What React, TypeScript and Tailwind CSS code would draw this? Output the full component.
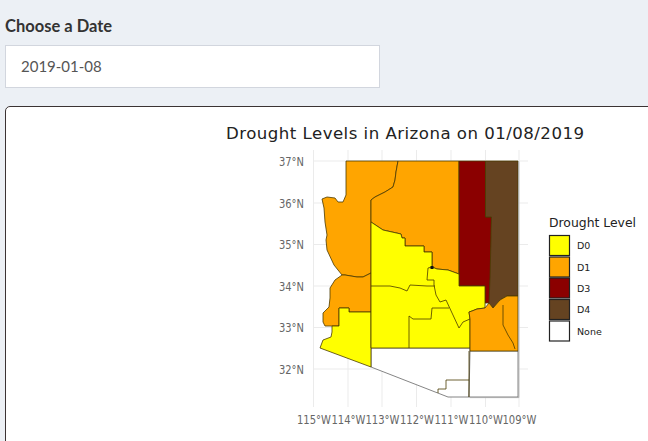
const GRID_X = [313.5, 348, 382, 416.5, 451, 485.5, 519];
const GRID_Y = [161, 203, 244.5, 286, 327.5, 369];
const LONS = ["115°W", "114°W", "113°W", "112°W", "111°W", "110°W", "109°W"];
const LATS = ["37°N", "36°N", "35°N", "34°N", "33°N", "32°N"];

const counties = [
  // pima
  { fill: "#ffffff", points: "371,348 470,348 469,397 448,397 371,367" },
  // cochise
  { fill: "#ffffff", points: "470,351 518,351 518,397 469,397" },
  // mohave
  { fill: "#ffa500", points: "346,161 398,161 396,172 395,180 393,187 385,192 375,197 371,200 371,273 363,277 357,277 345,275 342,275 334,265 327,250 326,240 327,235 325,222 324,208 322,199 327,197 335,198 338,202 343,202 346,195" },
  // coconino
  { fill: "#ffa500", points: "398,161 459,161 459,274 448,270 437,269 432,267 432,252 424,252 424,246 405,246 405,238 402,238 401,234 392,232 383,230 371,222 371,200 375,197 385,192 393,187 395,180 396,172" },
  // apache
  { fill: "#8b0000", points: "459,161 485.5,161 485.5,217 491.5,217 490,303 485,303 485,286 459,286" },
  // navajo side
  { fill: "#654321", points: "485.5,161 518,161 518,296 507,296 500,300 493,308 489,303 490,278 491.5,217 485.5,217" },
  // la paz
  { fill: "#ffa500", points: "342,275 345,275 357,277 363,277 371,273 371,312 349,312 349,308 339,308 339,326 325,326 323,322 323,313 329,307 330,298 330,288 335,280" },
  // yuma
  { fill: "#ffff00", points: "371,312 349,312 349,308 339,308 339,326 332,326 332,332 331,337 323,340 320,348 371,367" },
  // center
  { fill: "#ffff00", points: "371,222 383,230 392,232 401,234 402,238 405,238 405,246 424,246 424,252 432,252 432,267 437,269 448,270 459,274 459,286 485,286 485,308 477,309 472,311 469,312 470,319 470,348 371,348" },
  // greenlee + graham
  { fill: "#ffa500", points: "469,312 472,311 477,309 485,308 489,303 493,308 500,300 507,296 518,296 518,351 470,351 470,319" },
];

const innerLines = [
  "371,286 390,286 400,288 407,291 410,285 427,286 435,286",
  "432,267 428,268 427,280 434,280 434,285 436,295 440,302 446,300 459,328 463,322 470,319",
  "449,308 432,308 431,319 413,319 409,316 409,348",
  "503,305 503,325 508,335 513,343 515,349",
  "438,393 438,389 446,389 446,380 469,380",
  "469,351 469,397",
];

const legend = [
  { label: "D0", fill: "#ffff00", y: 235.5 },
  { label: "D1", fill: "#ffa500", y: 257 },
  { label: "D3", fill: "#8b0000", y: 278 },
  { label: "D4", fill: "#654321", y: 299.5 },
  { label: "None", fill: "#ffffff", y: 321 },
];

const DroughtPlot = () => {
  return (
    <svg width="648" height="335" viewBox="0 106 648 335" className="block font-['DejaVu_Sans',sans-serif]">
      <text x="226" y="139" fontSize="16.6" textLength="358" fill="#222">
        Drought Levels in Arizona on 01/08/2019
      </text>

      {GRID_X.map((x) => (
        <line key={x} x1={x} x2={x} y1="150" y2="407" stroke="#ebebeb" />
      ))}
      {GRID_Y.map((y) => (
        <line key={y} x1="313" x2="528" y1={y} y2={y} stroke="#ebebeb" />
      ))}

      {LATS.map((lat, i) => (
        <text key={lat} x="279" y={GRID_Y[i] + 4.5} fontSize="11.4" textLength="25" lengthAdjust="spacingAndGlyphs" fill="#666">
          {lat}
        </text>
      ))}
      {LONS.map((lon, i) => (
        <text key={lon} x={GRID_X[i] - 16.5} y="423.5" fontSize="12" textLength="34" lengthAdjust="spacingAndGlyphs" fill="#666">
          {lon}
        </text>
      ))}

      {counties.map((c) => (
        <polygon
          key={c.points}
          points={c.points}
          fill={c.fill}
          stroke={c.fill === "#ffffff" ? "#666" : "#4a3a00"}
          strokeWidth="0.8"
          strokeLinejoin="round"
        />
      ))}
      {innerLines.map((points) => (
        <polyline key={points} points={points} fill="none" stroke="#4a3a00" strokeWidth="0.8" />
      ))}
      <polyline points="518,161 518,397 469,397" fill="none" stroke="#aaa" strokeWidth="1" transform="translate(0.8,0.6)" />
      <rect x="430.5" y="266" width="3" height="3" fill="#111" />

      <text x="549" y="227" fontSize="12.4" textLength="87" fill="#222">
        Drought Level
      </text>
      {legend.map((item) => (
        <g key={item.label}>
          <rect x="549.5" y={item.y} width="20" height="20" fill={item.fill} stroke="#222" strokeWidth="1.2" />
          <text x="577" y={item.y + 13.5} fontSize="9.5" fill="#222">
            {item.label}
          </text>
        </g>
      ))}
    </svg>
  );
};

export default function App() {
  return (
    <div className="h-[441px] overflow-hidden bg-[#ecf0f5] pl-[5px] font-['Lato',sans-serif]">
      <div className="pt-[16px] text-[16.5px] leading-[20px] font-bold text-[#333]">Choose a Date</div>
      <div className="mt-[9px] flex h-[43px] w-[375px] items-center border border-[#d2d6de] bg-white pl-[15px] text-[15px] text-[#555]">
        2019-01-08
      </div>
      <div className="mt-[18px] h-[400px] w-[660px] overflow-hidden rounded-[5px] border border-[#3b3333] bg-white">
        <div className="-ml-[6px] -mt-[1px]">
          <DroughtPlot />
        </div>
      </div>
    </div>
  );
}
